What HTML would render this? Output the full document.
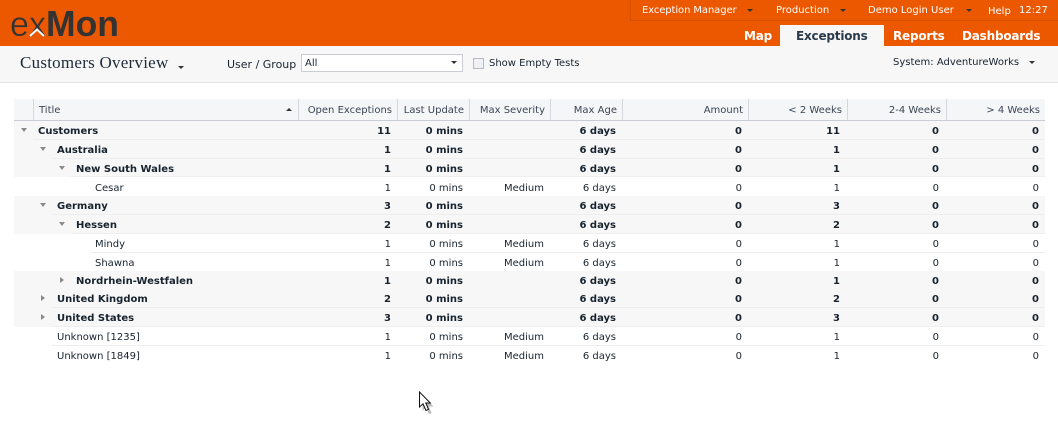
<!DOCTYPE html>
<html><head><meta charset="utf-8"><style>
html,body{margin:0;padding:0;width:1058px;height:423px;overflow:hidden;background:#fff}
body{position:relative;font-family:"DejaVu Sans","Liberation Sans",sans-serif;font-size:10px;color:#17232f}
div,span{position:absolute;white-space:nowrap}
.top{top:4px;color:#fff;font-size:10px;line-height:14px}
.tab{top:28px;font-weight:bold;font-size:12px;line-height:16px;color:#fff;letter-spacing:-.2px;font-family:"DejaVu Sans",sans-serif}
.arrow{width:0;height:0;border-left:3.5px solid transparent;border-right:3.5px solid transparent;border-top:3px solid #333}
.h{top:99px;height:21px;line-height:23px;text-align:right;color:#3a4654;border-right:1px solid #d4d7dd;box-sizing:border-box;padding-right:5px}
.r{left:0;width:1045px;height:19px}
.g{background:#f7f7f7}
.l{left:0;top:18px;height:1px;background:#eeeeee;right:0}
.t,.c{top:1px;line-height:19px}
.b{font-weight:bold}
.c{text-align:right}
.c1{right:654px}.c2{right:582px}.c3{right:501px}.c4{right:429px}.c5{right:303px}.c6{right:205px}.c7{right:106px}.c8{right:6px}
.d{width:0;height:0;border-left:3.5px solid transparent;border-right:3.5px solid transparent;border-top:4px solid #8a8a8a;top:7px}
.e{width:0;height:0;border-top:3.5px solid transparent;border-bottom:3.5px solid transparent;border-left:4px solid #8a8a8a;top:6px}
</style></head><body>
<div style="left:0;top:0;width:1058px;height:46px;background:#ec5800"></div>
<svg style="position:absolute;left:0;top:0" width="130" height="46"><text x="10" y="36" font-family="Liberation Sans" font-size="35" fill="#333" stroke="#ec5800" stroke-width=".4" textLength="36" lengthAdjust="spacingAndGlyphs">ex</text><text x="46" y="36" font-family="Liberation Sans" font-size="36" font-weight="bold" fill="#333" textLength="73" lengthAdjust="spacingAndGlyphs">Mon</text><path d="M30 36L37 29.500L44 36" fill="none" stroke="#fff" stroke-width="2"/></svg>
<div style="left:630px;top:0;width:428px;height:21px;border-left:1px solid #d94f00;border-bottom:1px solid #d94f00;box-sizing:border-box"></div>
<span class="top" style="left:642px;letter-spacing:-.1px">Exception Manager</span><div class="arrow" style="left:747px;top:9px"></div>
<span class="top" style="left:776px">Production</span><div class="arrow" style="left:840px;top:9px"></div>
<span class="top" style="left:868px">Demo Login User</span><div class="arrow" style="left:966px;top:9px"></div>
<span class="top" style="left:988px;top:5px">Help</span><span class="top" style="left:1019px;top:4px">12:27</span>
<span class="tab" style="left:744px">Map</span>
<div style="left:780px;top:25px;width:104px;height:21px;background:#f7f7f7"></div>
<span class="tab" style="left:796px;color:#2b3a4a">Exceptions</span>
<span class="tab" style="left:893px">Reports</span>
<span class="tab" style="left:962px">Dashboards</span>

<div style="left:0;top:46px;width:1058px;height:37px;background:#f7f7f7;border-bottom:1px solid #e4e4e4;box-sizing:border-box"></div>
<span style="left:20px;top:53px;font:17px/20px 'Liberation Serif',serif;color:#1d2b3a;letter-spacing:.25px">Customers Overview</span>
<div class="arrow" style="left:178px;top:66px"></div>
<span style="left:227px;top:58px;font-size:11px;line-height:14px">User / Group</span>
<div style="left:301px;top:54px;width:162px;height:18px;background:#fff;border:1px solid #c9ccd2;box-sizing:border-box"></div>
<span style="left:305px;top:57px;line-height:14px">All</span>
<div class="arrow" style="left:451px;top:61px"></div>
<div style="left:473px;top:58px;width:11px;height:11px;background:#f0f1f4;border:1px solid #b7bac4;box-sizing:border-box"></div>
<span style="left:489px;top:57px;line-height:14px">Show Empty Tests</span>
<span style="left:893px;top:56px;line-height:14px">System: AdventureWorks</span>
<div class="arrow" style="left:1029px;top:61px"></div>

<div style="left:14px;top:99px;width:1031px;height:21px;background:#f5f6f8"></div>
<div style="left:14px;top:120px;width:1031px;height:1px;background:#c9ccd6"></div>
<div class="h" style="left:14px;width:20px"></div>
<div class="h" style="left:34px;width:265px;text-align:left;padding-left:5px">Title</div>
<div class="arrow" style="left:286px;top:108px;border-top:0;border-bottom:3px solid #333"></div>
<div class="h" style="left:299px;width:99px">Open Exceptions</div>
<div class="h" style="left:398px;width:72px">Last Update</div>
<div class="h" style="left:470px;width:81px">Max Severity</div>
<div class="h" style="left:551px;width:72px">Max Age</div>
<div class="h" style="left:623px;width:126px">Amount</div>
<div class="h" style="left:749px;width:99px">&lt; 2 Weeks</div>
<div class="h" style="left:848px;width:99px">2-4 Weeks</div>
<div class="h" style="left:947px;width:98px;border-right:0">&gt; 4 Weeks</div>

<div class="r b" style="top:121px"><div class="g" style="left:14px;top:0;width:1031px;height:19px"></div><div class="l" style="left:33px"></div><div class="d" style="left:21px"></div><span class="t" style="left:38px">Customers</span><span class="c c1">11</span><span class="c c2">0 mins</span><span class="c c4">6 days</span><span class="c c5">0</span><span class="c c6">11</span><span class="c c7">0</span><span class="c c8">0</span></div>
<div class="r b" style="top:140px"><div class="g" style="left:14px;top:0;width:1031px;height:19px"></div><div class="l" style="left:52px"></div><div class="d" style="left:40px"></div><span class="t" style="left:57px">Australia</span><span class="c c1">1</span><span class="c c2">0 mins</span><span class="c c4">6 days</span><span class="c c5">0</span><span class="c c6">1</span><span class="c c7">0</span><span class="c c8">0</span></div>
<div class="r b" style="top:159px"><div class="g" style="left:14px;top:0;width:1031px;height:18px"></div><div class="l" style="left:71px;top:17px"></div><div class="d" style="left:59px"></div><span class="t" style="left:76px">New South Wales</span><span class="c c1">1</span><span class="c c2">0 mins</span><span class="c c4">6 days</span><span class="c c5">0</span><span class="c c6">1</span><span class="c c7">0</span><span class="c c8">0</span></div>
<div class="r" style="top:178px"><span class="t" style="left:95px">Cesar</span><span class="c c1">1</span><span class="c c2">0 mins</span><span class="c c3">Medium</span><span class="c c4">6 days</span><span class="c c5">0</span><span class="c c6">1</span><span class="c c7">0</span><span class="c c8">0</span></div>
<div class="r b" style="top:196px"><div class="g" style="left:14px;top:0;width:1031px;height:19px"></div><div class="l" style="left:52px"></div><div class="d" style="left:40px"></div><span class="t" style="left:57px">Germany</span><span class="c c1">3</span><span class="c c2">0 mins</span><span class="c c4">6 days</span><span class="c c5">0</span><span class="c c6">3</span><span class="c c7">0</span><span class="c c8">0</span></div>
<div class="r b" style="top:215px"><div class="g" style="left:14px;top:0;width:1031px;height:19px"></div><div class="l" style="left:71px"></div><div class="d" style="left:59px"></div><span class="t" style="left:76px">Hessen</span><span class="c c1">2</span><span class="c c2">0 mins</span><span class="c c4">6 days</span><span class="c c5">0</span><span class="c c6">2</span><span class="c c7">0</span><span class="c c8">0</span></div>
<div class="r" style="top:234px"><div class="l" style="left:90px"></div><span class="t" style="left:95px">Mindy</span><span class="c c1">1</span><span class="c c2">0 mins</span><span class="c c3">Medium</span><span class="c c4">6 days</span><span class="c c5">0</span><span class="c c6">1</span><span class="c c7">0</span><span class="c c8">0</span></div>
<div class="r" style="top:253px"><span class="t" style="left:95px">Shawna</span><span class="c c1">1</span><span class="c c2">0 mins</span><span class="c c3">Medium</span><span class="c c4">6 days</span><span class="c c5">0</span><span class="c c6">1</span><span class="c c7">0</span><span class="c c8">0</span></div>
<div class="r b" style="top:271px"><div class="g" style="left:14px;top:0;width:1031px;height:19px"></div><div class="l" style="left:71px"></div><div class="e" style="left:60px"></div><span class="t" style="left:76px">Nordrhein-Westfalen</span><span class="c c1">1</span><span class="c c2">0 mins</span><span class="c c4">6 days</span><span class="c c5">0</span><span class="c c6">1</span><span class="c c7">0</span><span class="c c8">0</span></div>
<div class="r b" style="top:289px"><div class="g" style="left:14px;top:0;width:1031px;height:19px"></div><div class="l" style="left:52px"></div><div class="e" style="left:41px"></div><span class="t" style="left:57px">United Kingdom</span><span class="c c1">2</span><span class="c c2">0 mins</span><span class="c c4">6 days</span><span class="c c5">0</span><span class="c c6">2</span><span class="c c7">0</span><span class="c c8">0</span></div>
<div class="r b" style="top:308px"><div class="g" style="left:14px;top:0;width:1031px;height:19px"></div><div class="l" style="left:52px"></div><div class="e" style="left:41px"></div><span class="t" style="left:57px">United States</span><span class="c c1">3</span><span class="c c2">0 mins</span><span class="c c4">6 days</span><span class="c c5">0</span><span class="c c6">3</span><span class="c c7">0</span><span class="c c8">0</span></div>
<div class="r" style="top:327px"><div class="l" style="left:52px"></div><span class="t" style="left:57px">Unknown [1235]</span><span class="c c1">1</span><span class="c c2">0 mins</span><span class="c c3">Medium</span><span class="c c4">6 days</span><span class="c c5">0</span><span class="c c6">1</span><span class="c c7">0</span><span class="c c8">0</span></div>
<div class="r" style="top:346px"><span class="t" style="left:57px">Unknown [1849]</span><span class="c c1">1</span><span class="c c2">0 mins</span><span class="c c3">Medium</span><span class="c c4">6 days</span><span class="c c5">0</span><span class="c c6">1</span><span class="c c7">0</span><span class="c c8">0</span></div>

<svg style="position:absolute;left:415px;top:388px" width="24" height="30"><path d="M6 6V21L9.500 18L12.500 24.500L15 23.300L12.300 17H17Z" fill="#777" opacity=".5" transform="translate(1.500 1.500)"/><path d="M4.500 4V19L8 15.800L11 22.500L13.500 21.300L10.800 15H15.300Z" fill="#fff" stroke="#111" stroke-width="1"/></svg>
</body></html>
